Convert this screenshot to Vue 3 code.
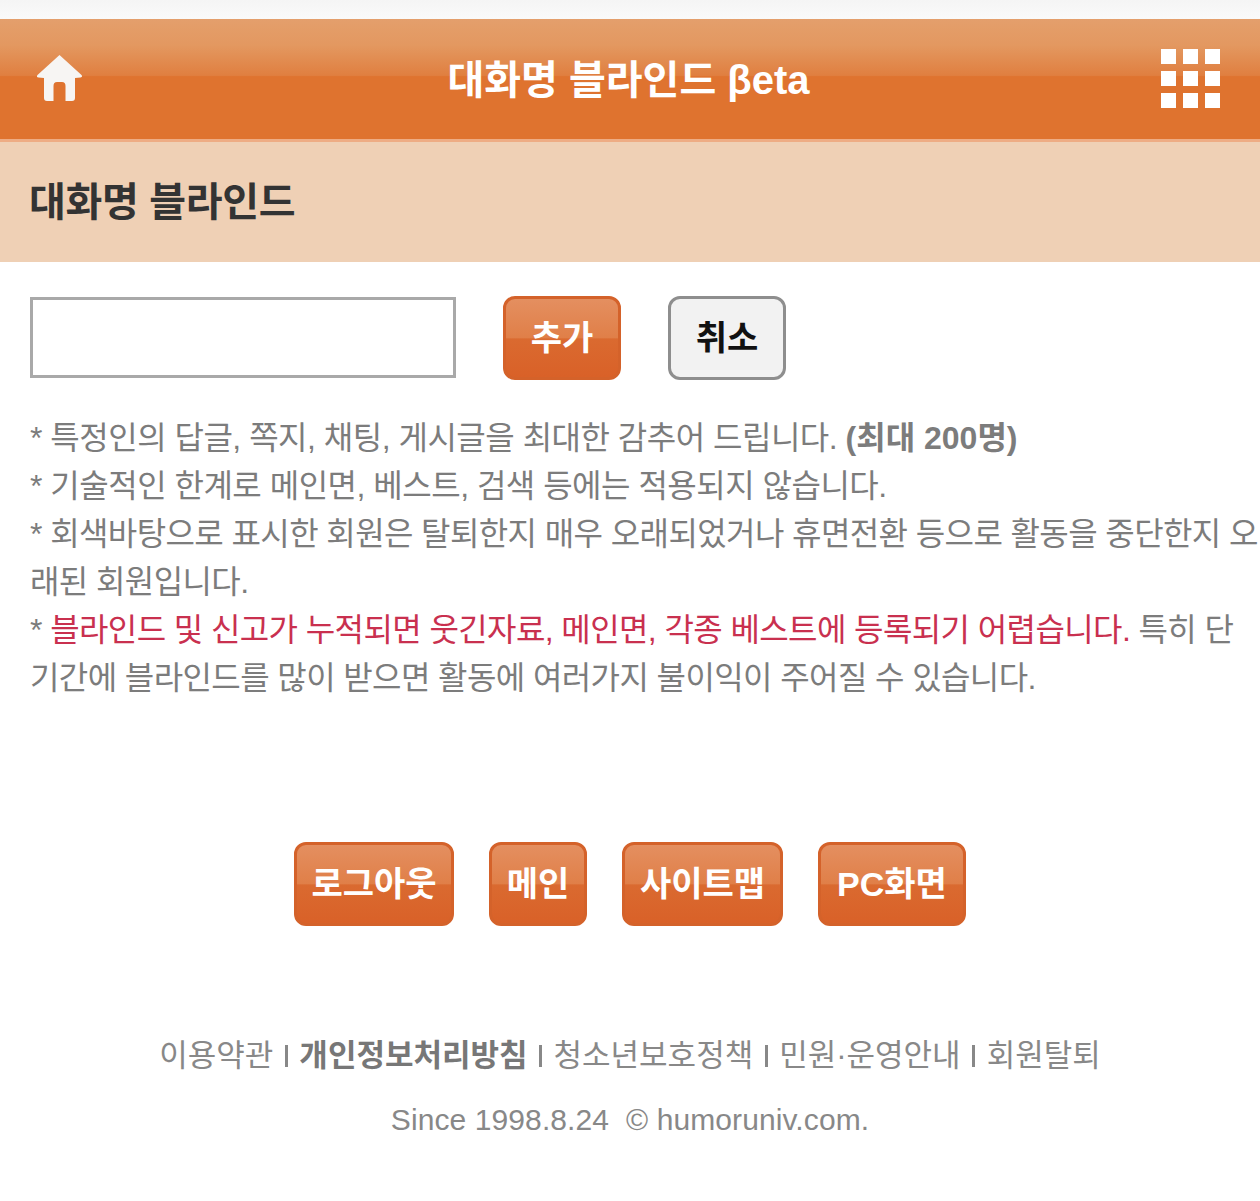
<template>
  <div class="page">
    <div class="top-strip"></div>
    <header class="topbar">
      <a class="home-btn">
        <svg width="46" height="46" viewBox="0 0 46 46">
          <path d="M22.5 0 L44.5 20 Q46 22 43.5 22.5 L38 23 L38 43 Q38 46 35 46 L28.5 46 L28.5 31 Q28.5 27 25 27 L20 27 Q16.500 27 16.500 31 L16.500 46 L10 46 Q7 46 7 43 L7 23 L1.500 22.500 Q-1 22 0.500 20 Z" fill="#f7f5f3" />
        </svg>
      </a>
      <h1 class="topbar-title">대화명 블라인드 βeta</h1>
      <div class="grid-icon">
        <span v-for="n in 9" :key="n"></span>
      </div>
    </header>
    <div class="title-bar">대화명 블라인드</div>

    <div class="form-row">
      <input class="name-input" type="text" />
      <button class="btn orange add-btn">추가</button>
      <button class="btn gray">취소</button>
    </div>

    <div class="notice">
      <p class="wide">* 특정인의 답글, 쪽지, 채팅, 게시글을 최대한 감추어 드립니다. <b>(최대 200명)</b></p>
      <p class="wide">* 기술적인 한계로 메인면, 베스트, 검색 등에는 적용되지 않습니다.</p>
      <p>* 회색바탕으로 표시한 회원은 탈퇴한지 매우 오래되었거나 휴면전환 등으로 활동을 중단한지 오래된 회원입니다.</p>
      <p>* <span class="red">블라인드 및 신고가 누적되면 웃긴자료, 메인면, 각종 베스트에 등록되기 어렵습니다.</span> 특히 단기간에 블라인드를 많이 받으면 활동에 여러가지 불이익이 주어질 수 있습니다.</p>
    </div>

    <div class="nav-row">
      <button v-for="item in navItems" :key="item" class="btn orange nav-btn">{{ item }}</button>
    </div>

    <div class="footer-links">
      <template v-for="(link, i) in links" :key="link.text">
        <span v-if="i > 0" class="sep"></span>
        <a :class="{ strong: link.strong }">{{ link.text }}</a>
      </template>
    </div>
    <div class="since">Since 1998.8.24 &nbsp;© humoruniv.com.</div>
  </div>
</template>

<script setup>
const navItems = ["로그아웃", "메인", "사이트맵", "PC화면"];

const links = [
  { text: "이용약관" },
  { text: "개인정보처리방침", strong: true },
  { text: "청소년보호정책" },
  { text: "민원·운영안내" },
  { text: "회원탈퇴" },
];
</script>

<style>
html,
body {
  margin: 0;
  background: #fff;
}
</style>

<style scoped>
.page {
  width: 1260px;
  height: 1201px;
  overflow: hidden;
  background: #fff;
  font-family: "Liberation Sans", "Noto Sans CJK KR", sans-serif;
  color: #7c7c7c;
}

.top-strip {
  height: 19px;
  background: linear-gradient(to bottom, #f5f5f5, #fafafa);
}

.topbar {
  height: 120px;
  display: flex;
  align-items: flex-start;
  padding: 0 40px 0 37px;
  border-bottom: 3px solid #eeac84;
  background: linear-gradient(to bottom, #e49f6c 0%, #e39860 22%, #e07f40 47%, #df732f 48%, #df732f 100%);
}

.home-btn {
  display: block;
  width: 59px;
  margin-top: 36px;
  line-height: 0;
}

.topbar-title {
  flex: 1;
  margin: 31px 0 0;
  text-align: center;
  font-size: 40px;
  line-height: 60px;
  font-weight: 700;
  color: #fff;
}

.grid-icon {
  margin-top: 30px;
  display: grid;
  grid-template-columns: repeat(3, 15px);
  grid-auto-rows: 15px;
  gap: 7px;
}

.grid-icon span {
  background: #fff;
}

.title-bar {
  height: 120px;
  line-height: 120px;
  padding-left: 29px;
  background: #efd0b5;
  color: #333;
  font-size: 40px;
  font-weight: 700;
  letter-spacing: -0.3px;
}

.form-row {
  display: flex;
  align-items: center;
  padding: 34px 30px 0;
}

.name-input {
  width: 426px;
  height: 81px;
  box-sizing: border-box;
  border: 3px solid #a9a9a9;
  background: #fff;
  margin: 0 47px 1px 0;
}

.btn {
  box-sizing: border-box;
  padding: 0 0 6px;
  border-radius: 12px;
  font-family: inherit;
  font-size: 34px;
  font-weight: 700;
}

.orange {
  border: 3px solid #d4622a;
  color: #fff;
  background: linear-gradient(to bottom, #e48f60 0%, #e07f48 50%, #da6a30 51%, #d96128 100%);
}

.gray {
  width: 118px;
  height: 84px;
  border: 3px solid #8e8e8e;
  color: #111;
  background: #f2f2f2;
}

.add-btn {
  width: 118px;
  height: 84px;
  margin-right: 47px;
}

.notice {
  margin-top: 34px;
  padding-left: 30px;
  font-size: 32px;
  line-height: 48px;
  letter-spacing: -0.6px;
}

.notice p {
  margin: 0;
}

.notice .wide {
  letter-spacing: -0.5px;
}

.notice b {
  font-weight: 700;
  letter-spacing: 0;
}

.red {
  color: #c9304f;
}

.nav-row {
  margin-top: 140px;
  display: grid;
  grid-template-columns: 160px 98px 161px 148px;
  justify-content: center;
  gap: 35px;
}

.nav-btn {
  height: 84px;
}

.footer-links {
  margin-top: 106px;
  display: flex;
  justify-content: center;
  align-items: center;
  gap: 11.5px;
  font-size: 31px;
  line-height: 48px;
  color: #888;
}

.sep {
  width: 3px;
  height: 22px;
  background: #888;
}

.strong {
  font-weight: 700;
  color: #777;
}

.since {
  margin-top: 16px;
  text-align: center;
  font-size: 30px;
  line-height: 48px;
  letter-spacing: 0.1px;
  color: #888;
}
</style>
